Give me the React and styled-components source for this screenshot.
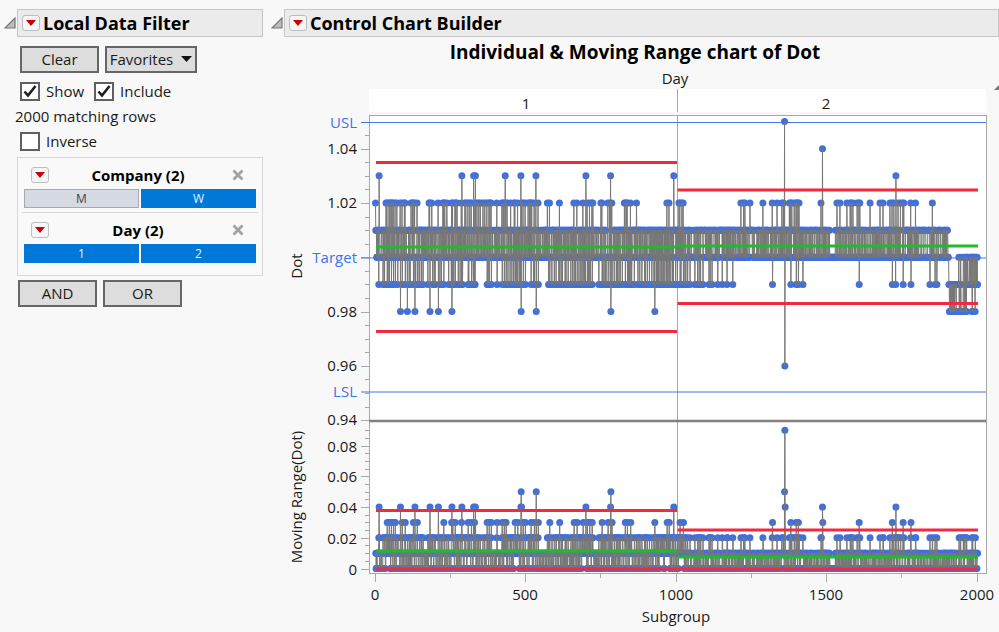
import React from "react";
import styled, { createGlobalStyle } from "styled-components";

// ---------- measurement data ----------

// [from, to] subgroups that hold readings of 1.02 and 0.99
const HIGH = [
  [0, 0], [35, 138], [178, 187], [208, 208], [224, 237], [254, 271],
  [297, 384], [402, 402], [424, 540], [571, 578], [611, 611], [659, 669],
  [689, 722], [749, 753], [773, 785], [827, 834], [847, 847], [867, 867],
  [968, 975], [1008, 1018], [1214, 1227], [1244, 1244], [1287, 1287],
  [1318, 1318], [1334, 1334], [1350, 1355], [1375, 1407], [1480, 1480],
  [1533, 1543], [1566, 1586], [1600, 1609], [1643, 1643], [1676, 1686],
  [1709, 1722], [1736, 1755], [1780, 1780], [1794, 1794], [1850, 1850],
];
const LOW = [
  [11, 11], [25, 158], [174, 198], [214, 330], [370, 384], [403, 403],
  [420, 497], [516, 540], [570, 722], [742, 1045], [1061, 1088],
  [1108, 1118], [1137, 1137], [1152, 1152], [1168, 1168], [1187, 1187],
  [1420, 1420], [1728, 1728], [1842, 1842], [1859, 1865],
];
// subgroups where a reading of 1.02 is followed by 0.99
const SWINGS = [
  38, 45, 52, 59, 65, 88, 98, 125, 132, 138, 226, 256, 264, 285, 307, 318,
  328, 370, 377, 384, 403, 420, 427, 433, 463, 472, 490, 497, 516, 527, 540,
  578, 611, 659, 669, 689, 703, 711, 719, 752, 772, 785, 829, 836, 847, 968,
  975, 1011, 1022, 1318, 1379, 1397, 1404, 1606, 1716, 1752, 1778,
];
// [subgroup, reading, reading, ...]
const SPIKES = [
  [11, 99, 103, 101], [82, 102, 98, 100], [105, 100, 98, 100],
  [130, 102, 98, 100], [180, 102, 98, 100], [208, 102, 98, 100],
  [253, 102, 98, 100], [286, 99, 103, 101], [325, 99, 103, 101],
  [331, 99, 103, 101], [430, 101, 103, 101],
  [482, 99, 103, 98, 102, 100], [532, 101, 103, 98, 100],
  [698, 99, 103, 101], [780, 99, 103, 98, 100], [927, 101, 98, 100],
  [990, 99, 103, 101], [1358, 100, 105, 96, 100], [1484, 100, 104, 101],
  [1728, 99, 103, 101],
];

function createRandom(seed) {
  let state = seed;
  return () => {
    state = (state * 1664525 + 1013904223) % 4294967296;
    return state / 4294967296;
  };
}

// readings are kept in hundredths so the differences stay exact
function buildReadings() {
  const random = createRandom(41);
  const out = [100];
  for (let i = 1; i <= 2000; i++) {
    const flip = random() < 0.44;
    out.push(flip ? 201 - out[i - 1] : out[i - 1]);
  }
  const put = (ranges, value, before, after, step) => {
    ranges.forEach(([from, to]) => {
      let i = from;
      while (i <= to) {
        out[i] = value;
        if (i > 0) out[i - 1] = before;
        out[i + 1] = random() < 0.5 ? before : after;
        if (i === to) break;
        i = Math.min(to, i + 3 + Math.floor(random() * step));
      }
    });
  };
  put(LOW, 99, 101, 100, 7);
  put(HIGH, 102, 100, 101, 11);
  SWINGS.forEach((i) => {
    out[i - 1] = 100;
    out[i] = 102;
    out[i + 1] = 99;
    out[i + 2] = 100;
  });
  SPIKES.forEach(([start, ...values]) =>
    values.forEach((value, n) => {
      out[start + n] = value;
    })
  );
  for (let i = 1905; i <= 2000; i++) {
    const low = i < 1930 || (i > 1938 && i < 1966) || (i > 1978 && i < 1997);
    const raised = i >= 1938;
    const pick = random();
    if (low && pick < 0.4) out[i] = 98;
    else if (raised && pick > 0.65) out[i] = 100;
    else out[i] = 99;
  }
  return out;
}

const READINGS = buildReadings();
const RANGES = READINGS.slice(1).map((v, i) => Math.abs(v - READINGS[i]));

// ---------- chart geometry ----------

const PLOT = { left: 98, right: 715, top: 47, split: 353, bottom: 505 };
const DAY_EDGE = 406;
const xAt = (i) => 104.5 + i * 0.301;
const yDot = (v) => 189.3 - (v - 100) * 27.15;
const yRange = (v) => 500.5 - v * 15.35;

const dotTicks = Array.from({ length: 23 }, (_, i) => 94 + i * 0.5);
const rangeTicks = Array.from({ length: 19 }, (_, i) => i * 0.5);

const LIMITS = [
  { day: 1, y: 94.5 }, { day: 1, y: 263.5 },
  { day: 2, y: 122 }, { day: 2, y: 235.5 },
  { day: 1, y: 179, center: true }, { day: 2, y: 178, center: true },
  { day: 1, y: 442.5 }, { day: 2, y: 462 },
  { day: 1, y: 483, center: true }, { day: 2, y: 489, center: true },
  { day: 1, y: 501 }, { day: 2, y: 501 },
];

const SPECS = [
  { name: "USL", y: 54.5 },
  { name: "Target", y: 190 },
  { name: "LSL", y: 324 },
];

function Series({ values, offset, scale }) {
  const points = values.map((v, i) => [xAt(i + offset), scale(v)]);
  const seen = new Set();
  const dots = points.filter(([x, y]) => {
    const key = `${Math.round(x * 2)}:${y}`;
    if (seen.has(key)) return false;
    seen.add(key);
    return true;
  });
  return (
    <g>
      {dots.map(([x, y]) => (
        <Point key={`${x}:${y}`} cx={x} cy={y} r="3.5" />
      ))}
      <Trace points={points.map((p) => p.map((n) => n.toFixed(2)).join()).join(" ")} />
    </g>
  );
}

function Chart() {
  return (
    <ChartSvg viewBox="0 0 728 564" role="img" aria-label="Individual and moving range chart">
      <Label x="404" y="16" $anchor="middle">Day</Label>
      <path d="M723 22 L728 17 V22 Z" fill="#777" />
      <rect x={PLOT.left} y="21" width={PLOT.right - PLOT.left} height="23" fill="#fff" />
      <Label x="255" y="41" $anchor="middle">1</Label>
      <Label x="555" y="41" $anchor="middle">2</Label>
      <Axis d={`M${DAY_EDGE}.5 21 V44`} />

      <rect
        x={PLOT.left + 0.5}
        y={PLOT.top + 0.5}
        width={PLOT.right - PLOT.left}
        height={PLOT.bottom - PLOT.top}
        fill="#fff"
        stroke="#a8a8a8"
      />
      <Axis d={`M${DAY_EDGE}.5 47 V505`} />

      {dotTicks.map((v) => (
        <Axis key={v} d={`M${v % 2 === 0 ? 90 : 94} ${Math.round(yDot(v)) + 0.5} H98`} />
      ))}
      {[104, 102, 98, 96, 94].map((v) => (
        <Label key={v} x="86" y={Math.round(yDot(v)) + 5} $anchor="end">
          {(v / 100).toFixed(2)}
        </Label>
      ))}
      {rangeTicks.map((v) => (
        <Axis key={v} d={`M${v % 2 === 0 ? 90 : 94} ${Math.round(yRange(v)) + 0.5} H98`} />
      ))}
      {[8, 6, 4, 2, 0].map((v) => (
        <Label key={v} x="86" y={Math.round(yRange(v)) + 6} $anchor="end">
          {v ? (v / 100).toFixed(2) : "0"}
        </Label>
      ))}
      {[0, 250, 500, 750, 1000, 1250, 1500, 1750, 2000].map((v) => (
        <Axis key={v} d={`M${Math.round(xAt(v)) - 0.5} 506 v${v % 500 ? 4 : 8}`} />
      ))}
      {[0, 500, 1000, 1500, 2000].map((v) => (
        <Label key={v} x={Math.round(xAt(v)) - 1} y="532" $anchor="middle">{v}</Label>
      ))}
      <Label x="405" y="554" $anchor="middle">Subgroup</Label>
      <Label transform="translate(31 198) rotate(-90)" $anchor="middle">Dot</Label>
      <Label transform="translate(31 429) rotate(-90)" $anchor="middle">Moving Range(Dot)</Label>

      {SPECS.map((s) => (
        <g key={s.name}>
          <Label x="86" y={Math.round(s.y) + 5} $anchor="end" $spec>{s.name}</Label>
          <SpecLine d={`M90 ${s.y} H715`} />
        </g>
      ))}

      <Series values={READINGS} offset={0} scale={yDot} />
      <Series values={RANGES} offset={1} scale={yRange} />
      <path d={`M${PLOT.left} ${PLOT.split} H${PLOT.right}`} stroke="#808080" strokeWidth="2.4" />

      {LIMITS.map((l) => (
        <Limit
          key={`${l.day}-${l.y}`}
          $center={l.center}
          d={l.day === 1 ? `M105 ${l.y} H406` : `M406.5 ${l.y} H707`}
        />
      ))}
    </ChartSvg>
  );
}

// ---------- panels ----------

function MenuButton({ label }) {
  return (
    <RedMenu type="button" aria-label={label}>
      <svg width="10" height="6" viewBox="0 0 10 6" aria-hidden="true">
        <path d="M0 0 H10 L5 6 Z" fill="#c8000a" />
      </svg>
    </RedMenu>
  );
}

function PanelHeader({ title }) {
  return (
    <HeaderRow>
      <Disclosure type="button" aria-label={`Collapse ${title}`}>
        <svg width="12" height="12" viewBox="0 0 12 12" aria-hidden="true">
          <path d="M1 11 L11 1 V11 Z" fill="#bdbdbd" stroke="#777" strokeWidth="1.2" />
        </svg>
      </Disclosure>
      <TitleBar>
        <MenuButton label={`${title} menu`} />
        <PanelTitle>{title}</PanelTitle>
      </TitleBar>
    </HeaderRow>
  );
}

function Check({ label, checked }) {
  return (
    <CheckLabel>
      <CheckMark>
        <input type="checkbox" defaultChecked={checked} />
        <svg width="14" height="14" viewBox="0 0 14 14" aria-hidden="true">
          <path d="M1.5 7.5 L5 11.5 L12.5 2" fill="none" stroke="#1e1e1e" strokeWidth="2.6" />
        </svg>
      </CheckMark>
      {label}
    </CheckLabel>
  );
}

function FilterColumn({ name, options }) {
  return (
    <FilterBlock>
      <FilterHead>
        <MenuButton label={`${name} menu`} />
        <FilterName>{name} (2)</FilterName>
        <CloseButton type="button" aria-label={`Remove ${name}`}>
          <svg width="12" height="12" viewBox="0 0 12 12" aria-hidden="true">
            <path d="M1.5 1.5 L10.5 10.5 M10.5 1.5 L1.5 10.5" stroke="#a0a2a6" strokeWidth="2.8" />
          </svg>
        </CloseButton>
      </FilterHead>
      <Options>
        {options.map((o) => (
          <Option key={o.label} type="button" aria-pressed={o.on} $on={o.on}>
            {o.label}
          </Option>
        ))}
      </Options>
    </FilterBlock>
  );
}

export default function App() {
  return (
    <>
      <GlobalStyle />
      <Page>
        <Sidebar>
          <PanelHeader title="Local Data Filter" />
          <FilterBody>
            <ButtonRow>
              <PushButton type="button">Clear</PushButton>
              <PushButton type="button" aria-haspopup="menu" $menu>
                Favorites
                <svg width="11" height="6" viewBox="0 0 11 6" aria-hidden="true">
                  <path d="M0 0 H11 L5.5 6 Z" fill="#111" />
                </svg>
              </PushButton>
            </ButtonRow>
            <CheckRow>
              <Check label="Show" checked />
              <Check label="Include" checked />
            </CheckRow>
            <Matching>2000 matching rows</Matching>
            <CheckRow>
              <Check label="Inverse" />
            </CheckRow>
          </FilterBody>
          <FilterBox>
            <FilterColumn
              name="Company"
              options={[{ label: "M", on: false }, { label: "W", on: true }]}
            />
            <FilterColumn
              name="Day"
              options={[{ label: "1", on: true }, { label: "2", on: true }]}
            />
          </FilterBox>
          <LogicRow>
            <PushButton type="button">AND</PushButton>
            <PushButton type="button">OR</PushButton>
          </LogicRow>
        </Sidebar>
        <Main>
          <PanelHeader title="Control Chart Builder" />
          <ChartTitle>Individual &amp; Moving Range chart of Dot</ChartTitle>
          <Chart />
        </Main>
      </Page>
    </>
  );
}

const GlobalStyle = createGlobalStyle`
  * {
    box-sizing: border-box;
  }
  body {
    margin: 0;
    background: #f8f8f8;
    color: #1a1a1a;
    font-family: "Open Sans", "Noto Sans", sans-serif;
    font-size: 15px;
    line-height: 20px;
  }
  button {
    font: inherit;
    color: inherit;
    padding: 0;
  }
  svg {
    display: block;
  }
`;

const Page = styled.div`
  display: grid;
  grid-template-columns: 263px minmax(0, 1fr);
  column-gap: 8px;
  padding-top: 9px;
`;

const Sidebar = styled.aside`
  padding-left: 4px;
`;

const Main = styled.main`
  min-width: 0;
`;

const HeaderRow = styled.header`
  display: flex;
  align-items: center;
  gap: 1px;
`;

const Disclosure = styled.button`
  width: 12px;
  height: 12px;
  border: 0;
  background: none;
`;

const TitleBar = styled.div`
  flex: 1;
  display: flex;
  align-items: center;
  gap: 3px;
  height: 28px;
  padding-left: 4px;
  background: #ebebeb;
  border: 1px solid #c6c6c6;
`;

const RedMenu = styled.button`
  display: grid;
  place-items: center;
  width: 18px;
  height: 16px;
  background: #f6f6f6;
  border: 1px solid #bdbdbd;
  border-radius: 3px;
`;

const PanelTitle = styled.h1`
  margin: 0;
  font-size: 18px;
  line-height: 24px;
  font-weight: 700;
  color: #000;
`;

const ChartTitle = styled.h2`
  margin: 3px 0 4px;
  font-size: 19px;
  line-height: 24px;
  font-weight: 700;
  text-align: center;
  color: #000;
`;

const FilterBody = styled.div`
  display: flex;
  flex-direction: column;
  gap: 5px;
  padding: 9px 0 6px 11px;
`;

const ButtonRow = styled.div`
  display: flex;
  gap: 6px;
  margin-bottom: 3px;
  padding-left: 5px;
`;

const PushButton = styled.button`
  display: flex;
  align-items: center;
  justify-content: center;
  gap: 8px;
  width: ${(p) => (p.$menu ? "92px" : "79px")};
  height: 27px;
  padding-bottom: 2px;
  background: #dddddd;
  border: 2px solid #666666;
`;

const CheckRow = styled.div`
  display: flex;
  gap: 10px;
  height: 20px;
  padding-left: 5px;
`;

const CheckLabel = styled.label`
  display: flex;
  align-items: center;
  gap: 6px;
`;

const CheckMark = styled.span`
  display: grid;
  place-items: center;
  input,
  svg {
    grid-area: 1 / 1;
  }
  input {
    appearance: none;
    width: 20px;
    height: 19px;
    margin: 0;
    background: #fff;
    border: 2px solid #606060;
  }
  svg {
    visibility: hidden;
    pointer-events: none;
  }
  input:checked + svg {
    visibility: visible;
  }
`;

const Matching = styled.p`
  margin: 0;
`;

const FilterBox = styled.section`
  margin: 0 0 4px 13px;
  padding: 0 4px 8px;
  border: 1px solid #d8d8d8;
  background: #f9f9f9;
`;

const FilterBlock = styled.div`
  padding: 3px 2px 4px;
  & + & {
    border-top: 1px solid #d8d8d8;
  }
`;

const FilterHead = styled.div`
  display: flex;
  align-items: center;
  height: 28px;
  padding: 0 12px 0 7px;
`;

const FilterName = styled.h3`
  flex: 1;
  margin: 0;
  padding-right: 5px;
  font-size: 15px;
  line-height: 20px;
  text-align: center;
  color: #000;
`;

const CloseButton = styled.button`
  width: 12px;
  height: 12px;
  border: 0;
  background: none;
`;

const Options = styled.div`
  display: grid;
  grid-template-columns: 1fr 1fr;
  gap: 2px;
`;

const Option = styled.button`
  height: 19px;
  font-size: 12px;
  line-height: 16px;
  color: ${(p) => (p.$on ? "#e6f2ff" : "#444")};
  background: ${(p) => (p.$on ? "#0078d7" : "#d5dae3")};
  border: 1px solid ${(p) => (p.$on ? "#0078d7" : "#a6a9ae")};
`;

const LogicRow = styled.div`
  display: flex;
  gap: 6px;
  padding-left: 14px;
`;

const ChartSvg = styled.svg`
  width: 100%;
  height: auto;
`;

const Label = styled.text`
  font-size: 15px;
  text-anchor: ${(p) => p.$anchor};
  fill: ${(p) => (p.$spec ? "#3f73ee" : "#1a1a1a")};
`;

const Axis = styled.path`
  fill: none;
  stroke: #a8a8a8;
`;

const SpecLine = styled.path`
  stroke: #4377f0;
`;

const Point = styled.circle`
  fill: #4070dc;
`;

const Trace = styled.polyline`
  fill: none;
  stroke: #777777;
  stroke-width: 1px;
  stroke-linejoin: bevel;
`;

const Limit = styled.path`
  stroke: ${(p) => (p.$center ? "#20bb2c" : "#f02b40")};
  stroke-width: 2.8px;
`;
